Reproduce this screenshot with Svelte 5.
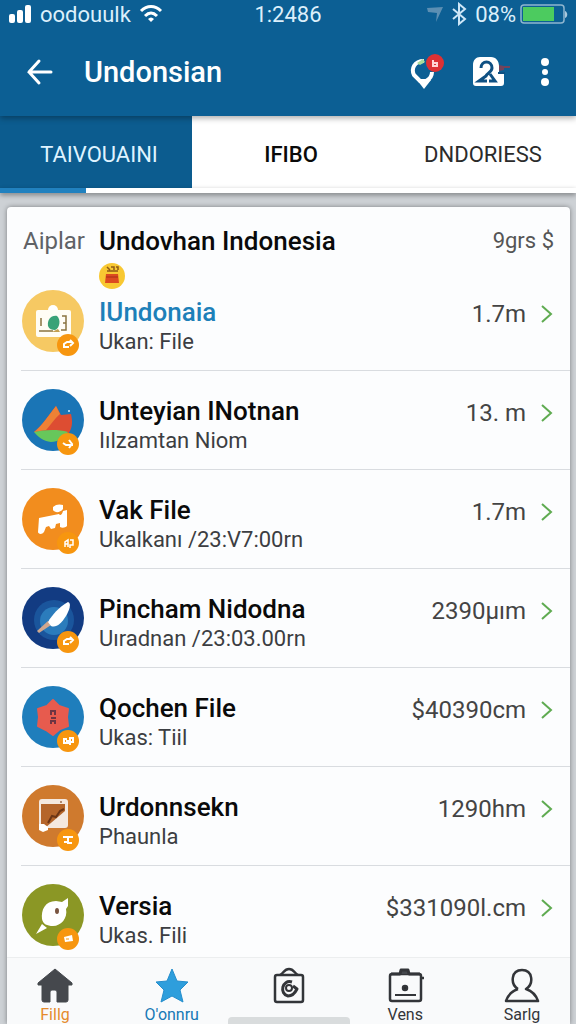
<script lang="ts">
	type Item = { icon: string; title: string; sub: string; value: string; active?: boolean };

	const items: Item[] = [
		{ icon: 'cash', title: 'IUndonaia', sub: 'Ukan: File', value: '1.7m', active: true },
		{ icon: 'boat', title: 'Unteyian INotnan', sub: 'Iılzamtan Niom', value: '13. m' },
		{ icon: 'cow', title: 'Vak File', sub: 'Ukalkanı /23:V7:00rn', value: '1.7m' },
		{ icon: 'knife', title: 'Pincham Nidodna', sub: 'Uıradnan /23:03.00rn', value: '2390µım' },
		{ icon: 'hex', title: 'Qochen File', sub: 'Ukas: Tiil', value: '$40390cm' },
		{ icon: 'photo', title: 'Urdonnsekn', sub: 'Phaunla', value: '1290hm' },
		{ icon: 'bird', title: 'Versia', sub: 'Ukas. Fili', value: '$331090l.cm' }
	];

	const tabs = ['TAIVOUAINI', 'IFIBO', 'DNDORIESS'];
	let current = $state(0);

	const nav = [
		{ icon: 'home', label: 'Fillg' },
		{ icon: 'star', label: "O'onnru" },
		{ icon: 'bag', label: '' },
		{ icon: 'case', label: 'Vens' },
		{ icon: 'user', label: 'Sarlg' }
	];
</script>

{#snippet avatar(icon: string)}
	<svg class="avatar" viewBox="0 0 62 66" aria-hidden="true">
		{#if icon === 'cash'}
			<circle cx="31" cy="31" r="31" fill="#f6c963" />
			<circle cx="31" cy="20" r="5" fill="#fff" />
			<rect x="14" y="20" width="35" height="27" rx="2" fill="#fffdf5" />
			<path d="M19 28v8M17 41h14M40 26h4v14h-5M41 33h3" fill="none" stroke="#8a7440" stroke-width="1.5" />
			<path d="M26 36c-1-6 3-11 9-10 4 3 3 12-2 14-3 0-6-1-7-4z" fill="#3aa276" />
			<path d="M30 42l6-3 2 3z" fill="#c3a052" />
		{:else if icon === 'boat'}
			<circle cx="31" cy="31" r="31" fill="#1a75b6" />
			<path d="M12 43c8-6 14-16 22-26l5 9 10-1c2 8 1 14-2 19z" fill="#dd4d32" />
			<path d="M12 43c8-6 14-16 22-26l4 8c-6 5-9 11-14 16z" fill="#ee8135" />
			<path d="M12 43c10-2 23-3 34 0-5 6-10 10-17 10-8-1-13-5-17-10z" fill="#67c75b" />
			<circle cx="47" cy="22" r="1" fill="#d7efff" />
		{:else if icon === 'cow'}
			<circle cx="31" cy="31" r="31" fill="#f28d1e" />
			<path d="M17 30l20-4c1 2 3 1 4-3l4-1v16c-2 2-5 2-7 1v-4l-4 1-1 4-4 1-2-3-3 1-2 5c-2 3-6 2-6 0z" fill="#fff" />
			<path d="M31 19c3-3 7-3 10-2v4c-3 4-8 4-10 1z" fill="#fff" />
		{:else if icon === 'knife'}
			<circle cx="31" cy="31" r="31" fill="#123b82" />
			<circle cx="32" cy="33" r="20" fill="#1a559c" />
			<circle cx="32" cy="34" r="14" fill="#2b7cbc" />
			<path d="M15 44l11-10 3 4-12 8z" fill="#d1a78d" />
			<path d="M26 35c4-7 11-15 20-20 4 1 1 9-2 14-5 8-10 12-15 10z" fill="#fff" />
		{:else if icon === 'hex'}
			<circle cx="31" cy="31" r="31" fill="#1f7ebc" />
			<path d="M31 14l6 6 9 3-1 8 1 9-8 3-7 6-7-5-8-4 1-9-1-8 9-3z" fill="#e75b4e" stroke="#e75b4e" stroke-width="2" stroke-linejoin="round" />
			<path d="M29 29v-4h4v4m-4 3h5m-5 6v-3h4v3" fill="none" stroke="#6e3442" stroke-width="2" />
		{:else if icon === 'photo'}
			<circle cx="31" cy="31" r="31" fill="#cf7a2e" />
			<rect x="17" y="14" width="29" height="29" rx="3" fill="#f4e8df" />
			<path d="M19 19h24v7L23 43h-4z" fill="#b5652a" />
			<path d="M17 39h5l4 3v3l-5 2-4-2z" fill="#fff" />
			<path d="M26 38l4-7 4 1 4-6 4-2" fill="none" stroke="#6d3616" stroke-width="2" />
			<circle cx="39" cy="17" r="1" fill="#9b6b4b" />
		{:else}
			<circle cx="31" cy="31" r="31" fill="#8b9725" />
			<path d="M20 35c-1-9 3-18 14-18l6 1 6-4v8l-2 3c2 9-5 17-13 17-6 0-10-2-11-7z" fill="#fff" />
			<path d="M20 40l5 4-11 6z" fill="#fff" />
			<ellipse cx="35" cy="27" rx="2" ry="3" fill="#7a5541" />
		{/if}
		<circle cx="46" cy="55" r="11" fill="#f7960f" />
		{#if icon === 'cash' || icon === 'knife'}
			<path d="M42 58v-4l3-2h5m-2-2 3 3-3 3m-5 1h4" fill="none" stroke="#fff" stroke-width="2" />
		{:else if icon === 'boat'}
			<path d="M41 54l3 2h7M47 51l3 4-3 4" fill="none" stroke="#fff" stroke-width="2" />
		{:else if icon === 'cow'}
			<path d="M43 59v-5l3-2v7m0-3h-3m5-4h3v5h-3v3" fill="none" stroke="#fff" stroke-width="1.5" />
		{:else if icon === 'hex'}
			<path d="M45 53h-3v4h4v-2h-2m4 4v-7h3v4h-3" fill="none" stroke="#fff" stroke-width="2" />
		{:else if icon === 'photo'}
			<path d="M41 52h10M42 57h3m1-4v5h4" fill="none" stroke="#fff" stroke-width="2" />
		{:else}
			<path d="M42 53l8-2 1 6-8 1z" fill="#fff" />
			<path d="M44 55h3" stroke="#f7960f" />
		{/if}
	</svg>
{/snippet}

<div class="screen">
	<header class="top">
		<div class="status">
			<span class="carrier">
				<svg width="24" height="18" viewBox="0 0 24 18" fill="#fff" aria-hidden="true">
					<rect x="1" y="9" width="6" height="9" rx="2" />
					<rect x="9" y="5" width="6" height="13" rx="2" />
					<rect x="17" y="0" width="6" height="18" rx="2" />
				</svg>
				<span>oodouulk</span>
				<svg width="24" height="18" viewBox="0 0 24 18" fill="none" stroke="#fff" stroke-width="3" aria-hidden="true">
					<path d="M2 6c6-6 14-6 20 0M6 11c4-4 8-4 12 0" />
					<path d="M12 17l-3-3c2-2 4-2 6 0z" fill="#fff" stroke="none" />
				</svg>
			</span>
			<span class="clock">1:2486</span>
			<span class="power">
				<svg width="16" height="18" viewBox="0 0 16 18" aria-hidden="true">
					<path d="M0 3l16-1-7 15 1-9-9-1z" fill="#5c8fb3" />
				</svg>
				<svg width="16" height="24" viewBox="0 0 16 24" fill="none" stroke="#cde6f7" stroke-width="2" aria-hidden="true">
					<path d="M2 7l12 10-6 5V2l6 5L2 17" />
				</svg>
				<span>08%</span>
				<svg width="48" height="20" viewBox="0 0 48 20" aria-hidden="true">
					<rect x="1" y="1" width="43" height="18" rx="3" fill="none" stroke="#8fb6cf" stroke-width="1.5" />
					<rect x="3" y="3" width="31" height="14" fill="#4ccb5f" />
					<path d="M45 7c3 1 3 6 0 7z" fill="#a9c9dd" />
				</svg>
			</span>
		</div>
		<div class="bar">
			<button class="icon-btn" aria-label="Back">
				<svg width="28" height="28" viewBox="0 0 28 28" fill="none" stroke="#fff" stroke-width="3" stroke-linecap="round" aria-hidden="true">
					<path d="M25 14H3M13 3L3 14l10 11" />
				</svg>
			</button>
			<h1>Undonsian</h1>
			<div class="actions">
				<button class="icon-btn" aria-label="Alerts">
					<svg width="36" height="38" viewBox="0 0 36 38" aria-hidden="true">
						<path d="M16 8C6 8 3 16 6 22l6 6h6c4-2 6-5 6-9" fill="none" stroke="#fff" stroke-width="4" />
						<path d="M9 27h14l-7 9z" fill="#fff" />
						<path d="M9 10l6-4 2 3-5 3z" fill="#a8dc9a" />
						<circle cx="27" cy="10" r="9" fill="#dd3134" />
						<path d="M25 7v6h4v-3h-4" fill="none" stroke="#ffd5d3" stroke-width="2" />
					</svg>
				</button>
				<button class="icon-btn" aria-label="Account">
					<svg width="40" height="32" viewBox="0 0 40 32" aria-hidden="true">
						<path d="M8 1h11c5 0 8 4 8 9v6h5v11c0 2-1 3-3 3H4c-2 0-3-1-3-3V9c0-5 3-8 7-8z" fill="#fff" />
						<path d="M9 12c0-8 11-8 11 0 0 4-5 5-6 8l-7 5h8M18 18l5 7h-6" fill="none" stroke="#0e5083" stroke-width="3" />
						<path d="M26 17h7" stroke="#0e5083" stroke-width="2" />
						<path d="M27 9l5 1v4l-5 1zM32 10h6v2h-6z" fill="#8c3c4e" opacity="0.8" />
					</svg>
				</button>
				<button class="icon-btn" aria-label="More">
					<svg width="10" height="30" viewBox="0 0 10 30" fill="#fff" aria-hidden="true">
						<circle cx="5" cy="5" r="4" /><circle cx="5" cy="15" r="3" /><circle cx="5" cy="25" r="4" />
					</svg>
				</button>
			</div>
		</div>
	</header>

	<div class="tabs" role="tablist">
		{#each tabs as tab, i}
			<button role="tab" aria-selected={current === i} class:selected={current === i} onclick={() => (current = i)}>
				{tab}
			</button>
		{/each}
	</div>
	<div class="progress"><div class="progress-fill"></div></div>

	<main class="card">
		<div class="section-head">
			<span class="section-label">Aiplar</span>
			<div class="section-main">
				<h2>Undovhan Indonesia</h2>
				<svg width="26" height="26" viewBox="0 0 26 26" aria-hidden="true">
					<circle cx="13" cy="13" r="13" fill="#f8c832" />
					<path d="M7 11h12l1 9H6z" fill="#dc4a20" />
					<path d="M8 4l3 3M12 4h3v3M17 4h2v3M8 8h11" fill="none" stroke="#8e5a15" stroke-width="1.5" />
					<path d="M7 14h12" stroke="#a82f17" />
				</svg>
			</div>
			<span class="section-value">9grs $</span>
		</div>

		<ul class="list">
			{#each items as item}
				<li>
					<a class="row" href="#{item.icon}">
						{@render avatar(item.icon)}
						<span class="text">
							<span class="title" class:active={item.active}>{item.title}</span>
							<span class="sub">{item.sub}</span>
						</span>
						<span class="value">{item.value}</span>
						<svg class="chevron" width="12" height="20" viewBox="0 0 12 20" fill="none" stroke="#5fab51" stroke-width="2" aria-hidden="true">
							<path d="M1 2l9 8-9 8" />
						</svg>
					</a>
				</li>
			{/each}
		</ul>

		<nav class="nav">
			{#each nav as entry}
				<a href="#{entry.icon}" class={entry.icon} aria-label={entry.label || 'Shop'}>
					<svg width="38" height="38" viewBox="0 0 38 38" fill="none" stroke="#333539" stroke-width="2.5" stroke-linejoin="round" aria-hidden="true">
						{#if entry.icon === 'home'}
							<path d="M19 3L2 17v2h4v15q0 2 2 2h6V26q0-2 2-2h3q2 0 2 2v10h9q2 0 2-2V19h4v-2z" fill="#45484d" stroke="#45484d" stroke-width="1" />
						{:else if entry.icon === 'star'}
							<path d="M19 3l5 12 11 1-8 8 3 12-11-6-11 6 3-12-8-8 11-1z" fill="#2e9edc" stroke="#248dcc" stroke-width="1" />
						{:else if entry.icon === 'bag'}
							<rect x="5" y="9" width="28" height="27" rx="2" />
							<path d="M10 9c4-2 4-6 9-6s5 4 9 6" />
							<path d="M22 16c-10-3-13 12-4 14 5 0 7-3 9-7l-4-3" stroke-width="3" />
							<circle cx="19" cy="22" r="3" stroke-width="2" />
						{:else if entry.icon === 'case'}
							<rect x="4" y="8" width="31" height="27" rx="2" />
							<path d="M5 8h9l1-4h7l1 4h11" fill="#45484d" stroke-width="3" />
							<path d="M9 29h21" stroke-width="2" />
							<circle cx="19" cy="22" r="2" fill="#222" />
							<path d="M35 12h3" />
						{:else}
							<path d="M15 23c-8-5-7-19 4-19s12 14 4 19c6 2 10 6 12 12H3c2-6 6-10 12-12" />
						{/if}
					</svg>
					<span>{entry.label}</span>
				</a>
			{/each}
		</nav>
	</main>
	<div class="handle"></div>
</div>

<style>
	:global(body) {
		margin: 0;
	}

	.screen {
		position: relative;
		height: 100vh;
		overflow: hidden;
		display: flex;
		flex-direction: column;
		background: #cdd1d5;
		font-family: Roboto, 'Liberation Sans', sans-serif;
		color: #0a0a0a;
	}

	button {
		border: 0;
		padding: 0;
		background: none;
		font: inherit;
		color: inherit;
		cursor: pointer;
	}

	a {
		color: inherit;
		text-decoration: none;
	}

	svg {
		display: block;
		flex-shrink: 0;
	}

	.top {
		position: relative;
		background: #0c5f94;
		color: #fff;
		box-shadow: 0 2px 6px rgba(0, 0, 0, 0.35);
	}

	.status {
		display: grid;
		grid-template-columns: 1fr auto 1fr;
		align-items: center;
		height: 28px;
		padding: 0 8px;
		font-size: 22px;
		color: #dceffb;
	}

	.carrier,
	.power {
		display: flex;
		align-items: center;
		gap: 8px;
	}

	.power {
		justify-content: flex-end;
	}

	.power svg:last-child {
		margin-left: -4px;
	}

	.bar {
		display: flex;
		align-items: center;
		height: 88px;
		padding: 0 26px;
	}

	.bar h1 {
		flex: 1;
		margin: 0 0 0 30px;
		font-size: 29px;
		font-weight: 500;
	}

	.actions {
		display: flex;
		align-items: center;
		gap: 28px;
	}

	.tabs {
		display: grid;
		grid-template-columns: repeat(3, 1fr);
		background: #fff;
	}

	.tabs button {
		height: 72px;
		padding: 4px 0 0 6px;
		font-size: 22px;
		color: #2b2b2b;
	}

	.tabs button:nth-child(2) {
		font-weight: 500;
		color: #0a0a0a;
	}

	.tabs button.selected {
		background: #0c5c8f;
		color: #dff3ff;
	}

	.progress {
		background: #fff;
		box-shadow: 0 2px 5px rgba(0, 0, 0, 0.4);
	}

	.progress-fill {
		width: 15%;
		height: 5px;
		background: #2181bf;
	}

	.card {
		flex: 1;
		margin: 14px 6px 0 7px;
		border-radius: 4px 4px 0 0;
		background: #fcfdfe;
		box-shadow: 0 0 5px rgba(0, 0, 0, 0.4);
	}

	.section-head {
		display: flex;
		box-sizing: border-box;
		height: 65px;
		padding: 18px 16px 0;
		line-height: 32px;
	}

	.section-label {
		width: 76px;
		font-size: 24px;
		color: #606266;
	}

	.section-main {
		flex: 1;
	}

	.section-main h2 {
		margin: 0 0 6px;
		font-size: 26px;
		line-height: 32px;
		font-weight: 500;
	}

	.section-value {
		font-size: 22px;
		color: #555;
	}

	.list {
		list-style: none;
		margin: 0 0 0 14px;
		padding: 0;
	}

	.list li {
		box-sizing: border-box;
		height: 99px;
		border-bottom: 1px solid #d9dce0;
	}

	.list li:last-child {
		height: 91px;
		border: 0;
	}

	.row {
		display: flex;
		align-items: flex-start;
		padding: 18px 17px 0 1px;
	}

	.avatar {
		width: 62px;
		height: 66px;
	}

	.text {
		flex: 1;
		display: flex;
		flex-direction: column;
		padding: 6px 0 0 15px;
		white-space: nowrap;
	}

	.title {
		font-size: 26px;
		line-height: 32px;
		font-weight: 500;
	}

	.title.active {
		color: #1d80b9;
	}

	.sub {
		font-size: 22px;
		line-height: 28px;
		color: #3c3e42;
	}

	.value {
		padding-top: 8px;
		font-size: 24px;
		line-height: 32px;
		color: #444;
	}

	.chevron {
		margin: 14px 0 0 15px;
	}

	.nav {
		display: flex;
		justify-content: space-between;
		padding: 0 16px;
		border-top: 1px solid #eceeef;
		background: #f9fafb;
	}

	.nav a {
		display: flex;
		flex-direction: column;
		align-items: center;
		gap: 2px;
		width: 64px;
		padding-top: 8px;
		font-size: 16px;
		line-height: 18px;
		color: #333539;
	}

	.nav .home {
		color: #e58a2b;
	}

	.nav .star {
		color: #1678b5;
	}

	.handle {
		position: absolute;
		bottom: 0;
		left: 50%;
		width: 122px;
		height: 7px;
		margin-left: -60px;
		border-radius: 4px 4px 0 0;
		background: #d9dcdd;
	}
</style>
